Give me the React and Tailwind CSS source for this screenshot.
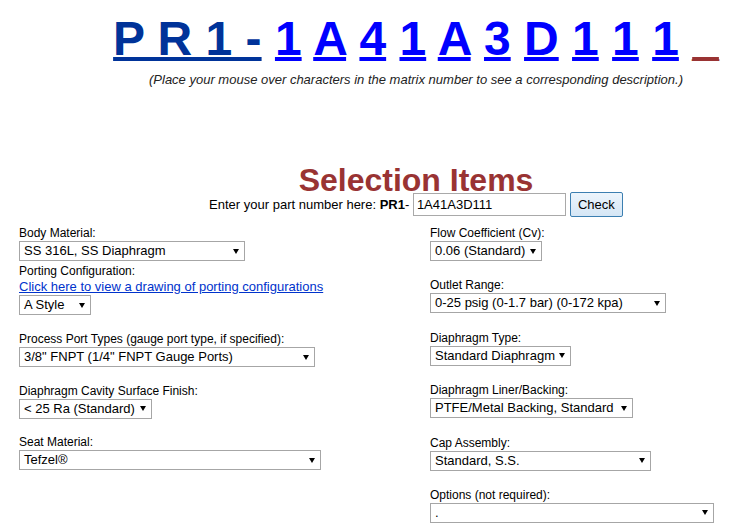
const Arrow = () => (
  <svg width="6" height="5" viewBox="0 0 6 5" className="shrink-0">
    <polygon points="0,0 6,0 3,5" fill="#000" />
  </svg>
)

const Select = ({ value, w }) => (
  <div className={`flex h-[20px] items-center justify-between border border-[#a6a6a6] bg-white pl-[4px] pr-[5px] text-[13px] leading-[18px] text-black ${w}`}>
    <span className="whitespace-nowrap">{value}</span>
    <Arrow />
  </div>
)

const Field = ({ label, value, w }) => (
  <div className="flex flex-col items-start">
    <div className="h-[16px] text-[12px] leading-[16px] whitespace-nowrap">{label}</div>
    <Select value={value} w={w} />
  </div>
)

const Code = ({ c }) => (
  <a href="#" className="text-[#0000ff] underline decoration-[4px]">{c}</a>
)

const App = () => {
  const codes = ["1", "A", "4", "1", "A", "3", "D", "1", "1", "1"]
  return (
    <div className="min-h-screen w-full bg-white font-['Liberation_Sans',Arial,sans-serif] text-black">
      <div className="flex w-full flex-col items-center pl-[87px] text-center">
        <div className="pt-[11px] text-[48px] font-bold leading-[56px] whitespace-pre">
          <span className="text-[#003399] underline decoration-[4px]">P R 1 -</span>
          {" "}
          {codes.map((c, i) => (
            <span key={i}>
              <Code c={c} />{" "}
            </span>
          ))}
          <span className="text-[#993333] underline decoration-[4px]">_</span>
        </div>
        <p className="mt-[5px] text-[13px] italic leading-[15px] text-[#222]">
          (Place your mouse over characters in the matrix number to see a corresponding description.)
        </p>

        <h1 className="mt-[82px] text-[32px] font-bold leading-[23px] text-[#993333]">Selection Items</h1>
        <div className="flex h-[25px] items-center text-[13px] whitespace-pre">
          <span>Enter your part number here: </span>
          <b>PR1</b>
          <span>- </span>
          <div className="flex h-[23px] w-[153px] items-center border border-[#a9a9a9] bg-white pl-[3px] text-left">1A41A3D111</div>
          <button className="ml-[4px] h-[25px] w-[53px] rounded-[2px] border border-[#3c7fb1] bg-gradient-to-b from-[#edf5fc] to-[#d5e6f5] text-[13px]">
            Check
          </button>
        </div>
      </div>

      <div className="mt-[8px] flex pl-[19px]">
        <div className="flex w-[411px] flex-col items-start">
          <Field label="Body Material:" value="SS 316L, SS Diaphragm" w="w-[226px]" />
          <div className="mt-[2px] flex flex-col items-start">
            <div className="h-[16px] text-[12px] leading-[16px]">Porting Configuration:</div>
            <a href="#" className="h-[16px] text-[13px] leading-[16px] text-[#0033cc] underline">
              Click here to view a drawing of porting configurations
            </a>
            <Select value="A Style" w="w-[72px]" />
          </div>
          <div className="mt-[16px] flex flex-col items-start gap-[15.5px]">
            <Field label="Process Port Types (gauge port type, if specified):" value={'3/8" FNPT (1/4" FNPT Gauge Ports)'} w="w-[296px]" />
            <Field label="Diaphragm Cavity Surface Finish:" value="< 25 Ra (Standard)" w="w-[133px]" />
            <Field label="Seat Material:" value="Tefzel®" w="w-[302px]" />
          </div>
        </div>

        <div className="flex flex-col items-start gap-[16.4px]">
          <Field label="Flow Coefficient (Cv):" value="0.06 (Standard)" w="w-[112px]" />
          <Field label="Outlet Range:" value="0-25 psig (0-1.7 bar) (0-172 kpa)" w="w-[236px]" />
          <Field label="Diaphragm Type:" value="Standard Diaphragm" w="w-[141px]" />
          <Field label="Diaphragm Liner/Backing:" value="PTFE/Metal Backing, Standard" w="w-[203px]" />
          <Field label="Cap Assembly:" value="Standard, S.S." w="w-[221px]" />
          <Field label="Options (not required):" value="." w="w-[284px]" />
        </div>
      </div>
    </div>
  )
}

export default App
